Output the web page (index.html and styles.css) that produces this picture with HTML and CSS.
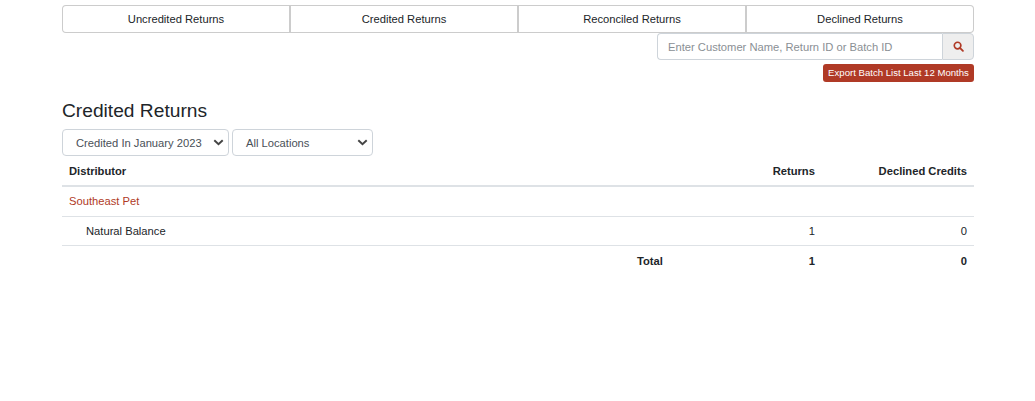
FILE: index.html
```html
<!DOCTYPE html>
<html lang="en">
<head>
<meta charset="utf-8">
<title>Credited Returns</title>
<link rel="stylesheet" href="styles.css">
</head>
<body>
<main class="page">
  <nav class="tabs">
    <a class="tab">Uncredited Returns</a>
    <a class="tab">Credited Returns</a>
    <a class="tab">Reconciled Returns</a>
    <a class="tab">Declined Returns</a>
  </nav>
  <div class="tools">
    <div class="search">
      <input class="search-input" type="text" placeholder="Enter Customer Name, Return ID or Batch ID">
      <button class="search-btn" type="button" aria-label="Search">
        <svg viewBox="0 0 12 12" width="11" height="11"><circle cx="5" cy="5" r="3.6" fill="none" stroke="#b03a26" stroke-width="1.8"/><path d="M7.8 7.8L10.8 10.8" stroke="#b03a26" stroke-width="2" stroke-linecap="round"/></svg>
      </button>
    </div>
    <button class="export" type="button">Export Batch List Last 12 Months</button>
  </div>
  <h1 class="title">Credited Returns</h1>
  <div class="filters">
    <div class="select select-month"><span>Credited In January 2023</span><svg class="chev" viewBox="0 0 12 8" width="11" height="7"><path d="M1.2 1.4L6 6L10.8 1.4" fill="none" stroke="#444" stroke-width="2.2"/></svg></div>
    <div class="select select-loc"><span>All Locations</span><svg class="chev" viewBox="0 0 12 8" width="11" height="7"><path d="M1.2 1.4L6 6L10.8 1.4" fill="none" stroke="#444" stroke-width="2.2"/></svg></div>
  </div>
  <table class="grid">
    <colgroup><col class="c1"><col class="c2"><col class="c3"><col class="c4"></colgroup>
    <thead>
      <tr><th class="left" colspan="2">Distributor</th><th>Returns</th><th>Declined Credits</th></tr>
    </thead>
    <tbody>
      <tr class="row-dist"><td class="left dist" colspan="4">Southeast Pet</td></tr>
      <tr class="row-brand"><td class="left brand" colspan="2">Natural Balance</td><td>1</td><td>0</td></tr>
      <tr class="total"><td></td><td>Total</td><td>1</td><td>0</td></tr>
    </tbody>
  </table>
</main>
</body>
</html>
```
FILE: styles.css
```css
* { box-sizing: border-box; }
html, body { margin: 0; background: #fff; }
body { font-family: "Liberation Sans", Arial, sans-serif; font-size: 11.2px; color: #212529; }
.page { width: 912px; margin-left: 62px; padding-top: 5px; }
.tabs { display: flex; height: 28px; }
.tab {
  flex: 1; display: flex; align-items: center; justify-content: center;
  border: 1px solid #ccc; border-left-width: 0; border-right-width: 2px; color: #212529;
}
.tab:first-child { border-left-width: 1px; border-radius: 4px 0 0 4px; }
.tab:last-child { border-right-width: 1px; border-radius: 0 4px 4px 0; }
.tools { display: flex; flex-direction: column; align-items: flex-end; }
.search { display: flex; width: 317px; height: 27px; }
.search-input {
  flex: 1; min-width: 0; height: 100%; padding: 0 10px; font: inherit; color: #495057;
  border: 1px solid #ced4da; border-right: 0; border-radius: 4px 0 0 4px; outline: 0; background: #fff;
}
.search-input::placeholder { color: #8a8f94; opacity: 1; }
.search-btn {
  width: 32px; height: 100%; padding: 0; display: flex; align-items: center; justify-content: center;
  border: 1px solid #ced4da; border-radius: 0 4px 4px 0; background: #eee;
}
.export {
  margin-top: 4px; width: 151px; height: 18px; padding: 0; font: inherit; font-size: 9.6px; line-height: 1;
  color: #fff; background: #b03a26; border: 0; border-radius: 3px;
}
.title { margin: 18px 0 0; font-size: 19.2px; line-height: 22px; font-weight: 400; color: #212529; }
.filters { display: flex; gap: 3px; margin-top: 7px; }
.select {
  display: flex; align-items: center; justify-content: space-between; height: 27px;
  border: 1px solid #ced4da; border-radius: 4px; color: #495057; background: #fff;
}
.select-month { width: 167px; padding: 0 4px 0 13px; }
.select-loc { width: 141px; padding: 0 4px 0 13px; }
.chev { flex: none; }
.grid { width: 100%; border-collapse: collapse; table-layout: fixed; }
.c1 { width: 520px; } .c2 { width: 88px; } .c3 { width: 152px; } .c4 { width: 152px; }
.grid th, .grid td { padding: 0 7.1px 0 7px; text-align: right; }
.grid th { height: 30px; font-weight: 700; border-bottom: 2px solid #dee2e6; }
.grid td { border-bottom: 1px solid #dee2e6; }
.row-dist td { height: 30px; }
.row-brand td { height: 29px; }
.grid .left { text-align: left; }
.grid .dist { color: #b03a26; }
.grid .brand { padding-left: 24px; }
.grid .total td { height: 31px; padding-top: 1px; font-weight: 700; border-bottom: 0; }
```
